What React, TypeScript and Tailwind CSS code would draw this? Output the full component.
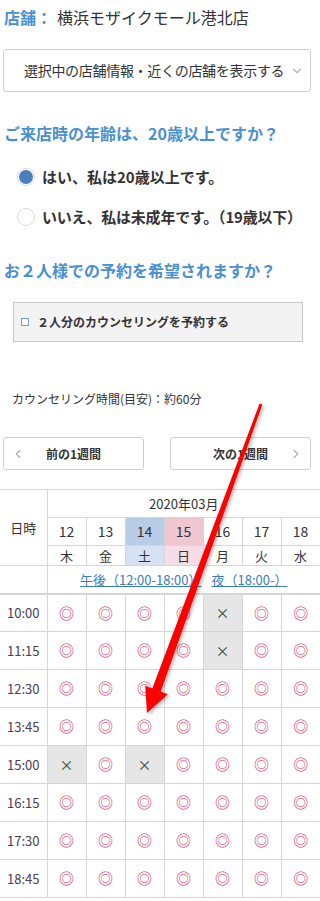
import { ChevronDown, ChevronLeft, ChevronRight } from "lucide-react";

const days = [
  { d: "12", w: "木", tone: "" },
  { d: "13", w: "金", tone: "" },
  { d: "14", w: "土", tone: "sat" },
  { d: "15", w: "日", tone: "sun" },
  { d: "16", w: "月", tone: "" },
  { d: "17", w: "火", tone: "" },
  { d: "18", w: "水", tone: "" },
];

const times = ["10:00", "11:15", "12:30", "13:45", "15:00", "16:15", "17:30", "18:45"];

// x = full, others open
const closed: Record<string, number[]> = {
  "10:00": [4],
  "11:15": [4],
  "15:00": [0, 2],
};

function Arrow() {
  return (
    <svg
      className="pointer-events-none absolute left-0 top-0"
      width="320"
      height="901"
      viewBox="0 0 320 901"
    >
      <defs>
        <filter id="sh" x="-20%" y="-20%" width="140%" height="140%">
          <feDropShadow dx="2" dy="2" stdDeviation="1.5" floodColor="#000" floodOpacity="0.25" />
        </filter>
      </defs>
      <polygon
        filter="url(#sh)"
        fill="#ff0000"
        points="259.6,403.5 262.4,404.5 160.7,691.6 167.8,694.2 147,713 145.2,685.8 152.3,688.4"
      />
    </svg>
  );
}

export default function App() {
  return (
    <div
      className="relative w-[320px] min-h-[901px] bg-white text-[#333]"
      style={{ fontFamily: '"Noto Sans CJK JP", "Noto Sans", sans-serif' }}
    >
      <div className="px-1 pt-[7px] text-[16px] leading-[20px] whitespace-nowrap">
        <span className="font-bold text-[#4a90d0]">店舗：</span>
        <span className="ml-[5px]">横浜モザイクモール港北店</span>
      </div>

      <div className="mx-[3px] mt-[22px] flex h-[43px] w-[308px] items-center rounded-[3px] border border-[#cfcfcf] pl-[20px] pr-[6px]">
        <span className="flex-1 whitespace-nowrap text-[14px] tracking-[-0.3px]">
          選択中の店舗情報・近くの店舗を表示する
        </span>
        <ChevronDown size={14} strokeWidth={2} className="text-[#b5b5b5]" />
      </div>

      <h2 className="mt-[29px] px-1 text-[16px] font-bold leading-[24px] text-[#4a90d0] whitespace-nowrap">
        ご来店時の年齢は、20歳以上ですか？
      </h2>

      <div className="mt-[12px]">
        <label className="flex h-[40px] items-center gap-[7px] pl-[17px] whitespace-nowrap">
          <span className="flex h-[18px] w-[18px] items-center justify-center rounded-full border border-[#dcdcdc] bg-white">
            <span className="h-[14px] w-[14px] rounded-full bg-[#4a7fbe]" />
          </span>
          <span className="text-[15px] font-bold">はい、私は20歳以上です。</span>
        </label>
        <label className="flex h-[40px] items-center gap-[7px] pl-[17px] whitespace-nowrap">
          <span className="h-[18px] w-[18px] shrink-0 rounded-full border border-[#dcdcdc] bg-white" />
          <span className="text-[15px] font-bold tracking-[-0.2px]">いいえ、私は未成年です。（19歳以下）</span>
        </label>
      </div>

      <h2 className="mt-[21px] px-1 text-[16px] font-bold leading-[24px] text-[#4a90d0] whitespace-nowrap">
        お２人様での予約を希望されますか？
      </h2>

      <div className="ml-[13px] mt-[20px] flex h-[40px] w-[290px] items-center gap-[8px] border border-[#c8c8c8] bg-[#f3f3f3] pl-[7px]">
        <span className="h-[8px] w-[8px] border border-[#7c9cc8] bg-white" />
        <span className="text-[12px] font-bold whitespace-nowrap">２人分のカウンセリングを予約する</span>
      </div>

      <p className="ml-[12px] mt-[48px] text-[12px] leading-[18px] whitespace-nowrap">
        カウンセリング時間(目安)：約60分
      </p>

      <div className="mt-[29px] flex justify-between pl-[3px] pr-[9px]">
        <button
          type="button"
          className="relative flex h-[33px] w-[141px] items-center justify-center rounded-[3px] border border-[#cfcfcf] bg-white text-[12px] font-bold"
        >
          <ChevronLeft size={14} strokeWidth={2} className="absolute left-[7px] text-[#b0b0b0]" />
          前の1週間
        </button>
        <button
          type="button"
          className="relative flex h-[33px] w-[141px] items-center justify-center rounded-[3px] border border-[#cfcfcf] bg-white text-[12px] font-bold"
        >
          次の1週間
          <ChevronRight size={14} strokeWidth={2} className="absolute right-[7px] text-[#b0b0b0]" />
        </button>
      </div>

      <table className="mt-[19px] w-[320px] table-fixed border-collapse text-center">
        <colgroup>
          <col className="w-[47px]" />
          {days.map((d) => (
            <col key={d.d} className="w-[39px]" />
          ))}
        </colgroup>
        <thead>
          <tr className="h-[28px] border-t border-[#d6d6d6]">
            <th rowSpan={3} className="border-r border-[#d6d6d6] text-[13px] font-normal">
              日時
            </th>
            <th colSpan={7} className="text-[13px] font-normal">
              2020年03月
            </th>
          </tr>
          <tr className="h-[28px]">
            {days.map((d) => (
              <th
                key={d.d}
                className={
                  "border border-[#d6d6d6] text-[14px] font-normal " +
                  (d.tone === "sat" ? "bg-[#b9cde6]" : d.tone === "sun" ? "bg-[#efc7d0]" : "")
                }
              >
                {d.d}
              </th>
            ))}
          </tr>
          <tr className="h-[20px]">
            {days.map((d) => (
              <th
                key={d.w}
                className={
                  "border border-[#d6d6d6] text-[13px] font-normal leading-[18px] " +
                  (d.tone === "sat" ? "bg-[#d5e2f3]" : d.tone === "sun" ? "bg-[#f6dce6]" : "")
                }
              >
                {d.w}
              </th>
            ))}
          </tr>
          <tr className="h-[28px] border-b-2 border-[#d6d6d6]">
            <th className="border-r border-t border-[#d6d6d6]" />
            <th colSpan={7} className="border-t border-[#d6d6d6] text-[13px] font-normal whitespace-nowrap">
              <a className="text-[#3b7cc0] underline">午後（12:00-18:00）</a>
              <a className="ml-[10px] text-[#3b7cc0] underline">夜（18:00-）</a>
            </th>
          </tr>
        </thead>
        <tbody>
          {times.map((t) => (
            <tr key={t} className="h-[38px] border-b border-[#d6d6d6]">
              <td className="border-r border-[#d6d6d6] text-[13px] text-[#4b3a58]">{t}</td>
              {days.map((d, i) => {
                const full = (closed[t] || []).includes(i);
                return (
                  <td
                    key={d.d}
                    className={
                      "border-r border-[#d6d6d6] last:border-r-0 " +
                      (full ? "bg-[#e6e6e6] text-[14px] text-[#444]" : "text-[15px] text-[#e0336b]")
                    }
                  >
                    {full ? "×" : "◎"}
                  </td>
                );
              })}
            </tr>
          ))}
        </tbody>
      </table>

      <Arrow />
    </div>
  );
}
